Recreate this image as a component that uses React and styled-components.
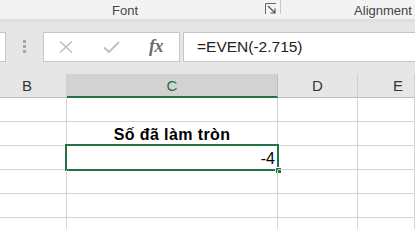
import React from 'react';
import styled, { createGlobalStyle } from 'styled-components';

const GlobalStyle = createGlobalStyle`
    html, body {
        margin: 0;
        padding: 0;
        background: #ffffff;
        overflow: hidden;
        font-family: "Liberation Sans", Arial, sans-serif;
    }
`;

const Page = styled.div`
    width: 415px;
    height: 229px;
    overflow: hidden;
    display: flex;
    flex-direction: column;
`;

const Ribbon = styled.div`
    height: 19px;
    background: #f3f3f3;
    display: flex;
    flex-shrink: 0;
`;

const RibbonGroup = styled.div`
    position: relative;
    width: ${p => p.$width}px;
    flex-shrink: 0;
    display: flex;
    justify-content: center;
    align-items: flex-start;
    padding-top: 3px;
    box-sizing: border-box;
    font-size: 13px;
    color: #444444;
    border-right: ${p => p.$separator ? '1px solid #c8c8c8' : 'none'};
    height: ${p => p.$separator ? '14px' : 'auto'};
    padding-right: ${p => p.$shift || 0}px;
`;

const Launcher = styled.svg`
    position: absolute;
    right: 3px;
    top: 3px;
`;

const FormulaBar = styled.div`
    height: 55px;
    flex-shrink: 0;
    background: linear-gradient(#dcdcdc 0px, #e6e6e6 5px, #e6e6e6 100%);
    display: flex;
    align-items: center;
`;

const Box = styled.div`
    height: 30px;
    box-sizing: border-box;
    background: #ffffff;
    border: 1px solid #c6c6c6;
    display: flex;
    align-items: center;
    flex-shrink: 0;
`;

const NameBox = styled(Box)`
    width: 6px;
    border-left: none;
`;

const Grip = styled.div`
    width: 37px;
    display: flex;
    flex-direction: column;
    align-items: center;
    gap: 2px;
    flex-shrink: 0;

    span {
        width: 3px;
        height: 3px;
        background: #a6a6a6;
    }
`;

const FxBox = styled(Box)`
    width: 137px;
    gap: 15px;
    padding-left: 7px;
`;

const FxButton = styled.div`
    width: 30px;
    display: flex;
    justify-content: center;
    align-items: center;
`;

const FxText = styled.span`
    font-family: "Liberation Serif", "Times New Roman", serif;
    font-style: italic;
    font-weight: bold;
    font-size: 18px;
    color: #6b6b6b;
    letter-spacing: -0.5px;
`;

const InputBox = styled(Box)`
    margin-left: 3px;
    flex: 1;
    border-right: none;
    padding-left: 13px;
    font-size: 15.5px;
    color: #222222;
`;

const Sheet = styled.div`
    display: grid;
    grid-template-columns: 67px 211px 80px 1fr;
    grid-auto-rows: 24px;
`;

const HeadCell = styled.div`
    box-sizing: border-box;
    background: ${p => p.$active ? '#d2d2d2' : '#e6e6e6'};
    border-bottom: ${p => p.$active ? '2px solid #217346' : '1px solid #bdbdbd'};
    border-right: 1px solid ${p => p.$active ? '#c0c0c0' : '#cfcfcf'};
    color: ${p => p.$active ? '#217346' : '#333333'};
    font-size: 15px;
    display: flex;
    justify-content: center;
    align-items: center;
    padding-bottom: ${p => p.$active ? 0 : 1}px;
    padding-left: ${p => Math.max(p.$nudge || 0, 0)}px;
    padding-right: ${p => Math.max(-(p.$nudge || 0), 0)}px;
`;

const Cell = styled.div`
    position: relative;
    box-sizing: border-box;
    border-right: 1px solid #d4d4d4;
    border-bottom: 1px solid #d4d4d4;
    display: flex;
    align-items: flex-end;
    justify-content: ${p => p.$align || 'flex-start'};
    padding: 0 2px 1px 2px;
    font-size: ${p => p.$size || 15}px;
    font-weight: ${p => p.$bold ? 700 : 400};
    letter-spacing: ${p => p.$bold ? '0.4px' : 'normal'};
    color: #000000;
    white-space: nowrap;
`;

const Selection = styled.div`
    position: absolute;
    top: -2px;
    left: -2px;
    right: -2px;
    bottom: -2px;
    border: 2px solid #217346;
    pointer-events: none;
`;

const FillHandle = styled.div`
    position: absolute;
    right: -4px;
    bottom: -4px;
    width: 5px;
    height: 5px;
    background: #217346;
    border: 1px solid #ffffff;
    border-right: none;
    border-bottom: none;
`;

const columns = ['B', 'C', 'D', 'E'];
const headNudge = { B: -12, C: 0, D: 0, E: 24 };

const rows = [
    {},
    { C: { text: 'Số đã làm tròn', bold: true, align: 'center', size: 16 } },
    { C: { text: '-4', align: 'flex-end', size: 16, selected: true } },
    {},
    {},
    {},
];

export default function App() {
    return <>
        <GlobalStyle/>
        <Page>
            <Ribbon>
                <RibbonGroup $width={281} $separator $shift={30}>
                    Font
                    <Launcher width="12" height="12" viewBox="0 0 12 12">
                        <path d="M0.5 11V0.5H11" fill="none" stroke="#666" strokeWidth="1"/>
                        <path d="M3 3L10 10M10 5.5V10H5.5" fill="none" stroke="#555" strokeWidth="1.2"/>
                    </Launcher>
                </RibbonGroup>
                <RibbonGroup $width={204}>
                    Alignment
                </RibbonGroup>
            </Ribbon>
            <FormulaBar>
                <NameBox/>
                <Grip><span/><span/><span/></Grip>
                <FxBox>
                    <FxButton>
                        <svg width="16" height="12" viewBox="0 0 16 12">
                            <path d="M2 0.5L14 11.5M14 0.5L2 11.5" stroke="#bdbdbd" strokeWidth="1.4"/>
                        </svg>
                    </FxButton>
                    <FxButton>
                        <svg width="17" height="12" viewBox="0 0 17 12">
                            <path d="M1 6.5L6 11L16 1" fill="none" stroke="#bdbdbd" strokeWidth="1.8"/>
                        </svg>
                    </FxButton>
                    <FxButton>
                        <FxText>fx</FxText>
                    </FxButton>
                </FxBox>
                <InputBox>=EVEN(-2.715)</InputBox>
            </FormulaBar>
            <Sheet>
                {columns.map(c => (
                    <HeadCell key={c} $active={c === 'C'} $nudge={headNudge[c]}>{c}</HeadCell>
                ))}
                {rows.map((row, i) => columns.map(c => {
                    const cell = row[c];
                    return (
                        <Cell
                            key={i + c}
                            $align={cell && cell.align}
                            $bold={cell && cell.bold}
                            $size={cell && cell.size}
                        >
                            {cell && cell.text}
                            {cell && cell.selected && <Selection><FillHandle/></Selection>}
                        </Cell>
                    );
                }))}
            </Sheet>
        </Page>
    </>;
}
